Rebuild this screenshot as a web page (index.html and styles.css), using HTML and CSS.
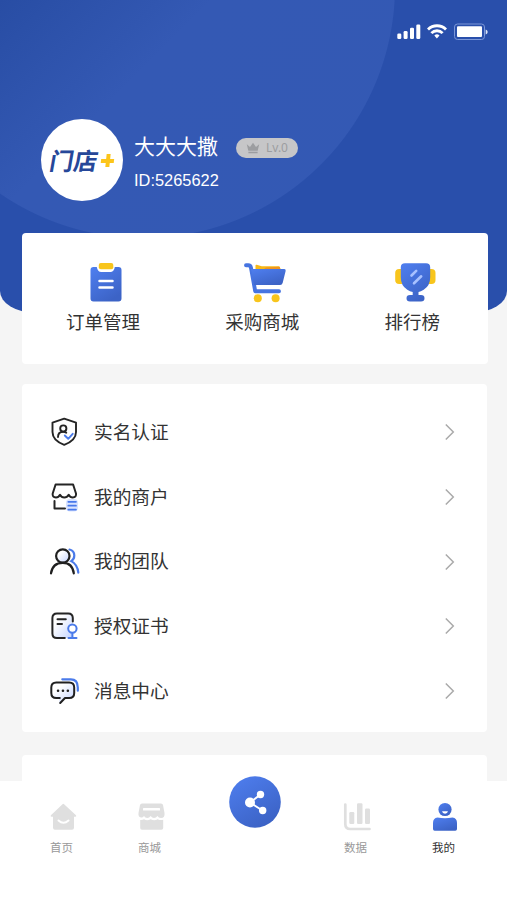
FILE: index.html
```html
<!DOCTYPE html>
<html lang="zh-CN">
<head>
<meta charset="utf-8">
<title>我的</title>
<link rel="stylesheet" href="styles.css">
</head>
<body>
<svg class="defs" width="0" height="0" aria-hidden="true">
  <defs>
    <linearGradient id="blue" x1="0" y1="0" x2="0.6" y2="1"><stop offset="0" stop-color="#4f7ff0"/><stop offset="1" stop-color="#3c63c6"/></linearGradient>
    <linearGradient id="tint" x1="0" y1="0" x2="1" y2="1"><stop offset="0.3" stop-color="#fff"/><stop offset="1" stop-color="#c3d3ff"/></linearGradient>
  </defs>
</svg>
<div class="screen">
  <header class="hero">
    <div class="status">
      <svg width="92" height="20" viewBox="0 0 92 20">
        <g fill="#fff">
          <rect x="1.3" y="11.5" width="4" height="5.5" rx="1.3"/>
          <rect x="7.6" y="9" width="4" height="8" rx="1.3"/>
          <rect x="14" y="5.7" width="4" height="11.3" rx="1.3"/>
          <rect x="20.3" y="2.5" width="4" height="14.5" rx="1.3"/>
          <path d="M38.3 13.6a3.6 3.6 0 0 1 5.2 0l-2.6 3z"/>
        </g>
        <g fill="none" stroke="#fff" stroke-width="2.8">
          <path d="M32 7.5a12.7 12.7 0 0 1 18 0"/>
          <path d="M35.4 11.1a7.8 7.8 0 0 1 11.2 0"/>
        </g>
        <rect x="58.5" y="2" width="30" height="15.5" rx="3" fill="none" stroke="#7c97d8"/>
        <rect x="61" y="4.3" width="25" height="10.8" rx="1" fill="#fff"/>
        <path d="M89.7 7.5q2 .6 2 2.5t-2 2.5z" fill="#dce4f7"/>
      </svg>
    </div>
    <div class="profile">
      <div class="avatar"><span class="logo">门店</span><span class="plus"></span></div>
      <div class="info">
        <div class="name-line">
          <span class="name">大大大撒</span>
          <span class="level">
            <svg width="14" height="12" viewBox="0 0 14 12"><path d="M.8 2.3 4 5.1 7 .7l3 4.4 3.2-2.8-1.5 6.500H2.300zM2.400 9.800h9.200v1.500H2.400z" fill="#9c9da0"/></svg>
            <span>Lv.0</span>
          </span>
        </div>
        <div class="uid">ID:5265622</div>
      </div>
    </div>
  </header>

  <main class="content">
    <section class="card shortcuts">
      <a class="shortcut">
        <svg width="46" height="42" viewBox="0 0 46 42">
          <path d="M11 4h3.300q.8 5 4.500 5h9q3.700 0 4.500-5H36q3 0 3 3v28.500q0 3-3 3H11q-3 0-3-3V7q0-3 3-3z" transform="translate(-.5)" fill="url(#blue)"/>
          <rect x="15.800" y="0" width="14.500" height="6.300" rx="2" fill="#f8c51c"/>
          <path d="M16.500 18h13M16.500 24.500h13" stroke="#fff" stroke-width="2.500" stroke-linecap="round"/>
        </svg>
        <span>订单管理</span>
      </a>
      <a class="shortcut cart">
        <svg width="46" height="42" viewBox="0 0 46 42">
          <path d="M14.500 7V2.500q0-1 1.200-.8l5 1.600H38L40.500 7z" fill="#f7b817"/>
          <path d="M25 4.500l14-.8V7H22z" fill="#ef9421"/>
          <path d="M5 2.300h2.200q2.300 0 2.800 2.600l4.200 23.300H38" fill="none" stroke="#4674e1" stroke-width="3.900" stroke-linecap="round" stroke-linejoin="round"/>
          <path d="M10 6h33q2 0 1.600 2l-3 12q-.5 2-2.500 2H13z" fill="url(#blue)"/>
          <circle cx="16.800" cy="35.300" r="4" fill="#f8c51c"/><circle cx="34.600" cy="35.300" r="4" fill="#f8c51c"/>
        </svg>
        <span>采购商城</span>
      </a>
      <a class="shortcut">
        <svg width="46" height="42" viewBox="0 0 46 42">
          <rect x="3.200" y="6" width="10" height="15" rx="4" fill="#f8c51c"/><rect x="33.500" y="6" width="10" height="15" rx="4" fill="#f8c51c"/>
          <path d="M13 .3h21q4.200 0 4.200 4v10q0 8.500-6.500 12.500-3 2-5.200 2.200V32H29q3.500 0 3.500 3.300T29 38.600H18q-3.500 0-3.500-3.300T18 32h2.700v-3q-2.700-.3-5.400-2.200Q8.800 22.800 8.800 14.300v-10q0-4 4.200-4z" fill="url(#blue)"/>
          <path d="M19.500 12.500l4.700-4.700M22 20.300l7.200-7" stroke="#a8c1ff" stroke-width="2.600" stroke-linecap="round"/>
        </svg>
        <span>排行榜</span>
      </a>
    </section>

    <nav class="card menu">
      <a class="row">
        <svg class="ico" width="32" height="32" viewBox="0 0 32 32" fill="none" stroke="#252525" stroke-width="1.900" stroke-linecap="round" stroke-linejoin="round">
          <path d="M16.200 2.600 L28 6.600V16q0 8.500-11.800 12.800Q4.500 24.500 4.500 16V6.600z"/>
          <circle cx="15.300" cy="12.500" r="3.100"/><path d="M10 21q0-5.300 5.300-5.300 1.800 0 3 1"/><path d="M16.800 19.500l3.400 3.300 4.500-5" stroke="#4b7bea"/>
        </svg>
        <span>实名认证</span><svg class="arrow" width="12" height="18" viewBox="0 0 12 18"><path d="M1.800 1.500 9.300 9l-7.500 7.500"/></svg>
      </a>
      <a class="row">
        <svg class="ico" width="32" height="32" viewBox="0 0 32 32" fill="none" stroke="#252525" stroke-width="2" stroke-linecap="round" stroke-linejoin="round">
          <rect x="18" y="18" width="12" height="12.500" rx="4" fill="#d8e3ff" stroke="none"/>
          <path d="M7.600 3.500h17.500l2.900 9q.6 3.700-3.300 4-2.500 0-4-2.700-1.600 2.700-4.400 2.700t-4.300-2.700Q10.500 16.500 8 16.500q-4-.3-3.300-4z"/>
          <path d="M6.500 20v7.600H17"/><path d="M20.300 20.800H28M20.300 24.700H28M20.300 28.600H28" stroke="#4879eb" stroke-width="1.700"/>
        </svg>
        <span>我的商户</span><svg class="arrow" width="12" height="18" viewBox="0 0 12 18"><path d="M1.800 1.500 9.300 9l-7.500 7.500"/></svg>
      </a>
      <a class="row">
        <svg class="ico" width="32" height="32" viewBox="0 0 32 32" fill="none" stroke="#202020" stroke-width="2.200" stroke-linecap="round">
          <path d="M21.500 3.500q4.800 1 4.800 6.100 0 3.700-3 5.500 6.200 3.300 7 11.500" stroke="#4b7bea"/>
          <circle cx="14.800" cy="10" r="6.700" fill="url(#tint)"/><path d="M3 27.300q1.500-10.500 11.800-10.500 9.700 0 11 10.500"/>
        </svg>
        <span>我的团队</span><svg class="arrow" width="12" height="18" viewBox="0 0 12 18"><path d="M1.800 1.500 9.300 9l-7.500 7.500"/></svg>
      </a>
      <a class="row">
        <svg class="ico" width="32" height="32" viewBox="0 0 32 32" fill="none" stroke="#252525" stroke-width="2" stroke-linecap="round">
          <path d="M4.500 8q0-4.500 4.500-4.500h11q4.500 0 4.500 4.500v20H9q-4.500 0-4.500-4.500z" fill="url(#tint)" stroke="none"/>
          <path d="M24.800 11.500V8q0-4.600-4.600-4.600H9Q4.400 3.400 4.400 8v15.500Q4.400 28 9 28h7.800"/>
          <path d="M9.500 9.300h8.300M9.500 14h4.500"/><g stroke="#4b7bea"><circle cx="24.400" cy="18.600" r="4.200" fill="#fff"/><path d="M24.400 23v4.800M20.500 28h8"/></g>
        </svg>
        <span>授权证书</span><svg class="arrow" width="12" height="18" viewBox="0 0 12 18"><path d="M1.800 1.500 9.300 9l-7.500 7.500"/></svg>
      </a>
      <a class="row">
        <svg class="ico" width="32" height="32" viewBox="0 0 32 32" fill="none" stroke="#202020" stroke-width="2" stroke-linecap="round" stroke-linejoin="round">
          <path d="M14.300 4.300h8.500q7 0 7 8.200v3.200" stroke="#4b7bea" stroke-width="2.200"/>
          <path d="M8.300 7.500h12.900q5 0 5 5V18q0 5-5 5h-4.500l-5.500 5 .2-5H8.300q-5 0-5-5v-5.500q0-5 5-5z" fill="url(#tint)" stroke="none"/>
          <path d="M12.200 28l4.800-5h4.200q5 0 5-5v-5.500q0-5-5-5H8.300q-5 0-5 5V18q0 5 5 5h3.500"/>
          <path d="M10 15.700h.1M14.900 15.700h.1M19.800 15.700h.1" stroke-width="2.500"/>
        </svg>
        <span>消息中心</span><svg class="arrow" width="12" height="18" viewBox="0 0 12 18"><path d="M1.800 1.500 9.300 9l-7.500 7.500"/></svg>
      </a>
    </nav>

    <section class="card next"></section>
  </main>

  <footer class="tabbar">
    <a class="tab">
      <svg width="32" height="32" viewBox="0 0 32 32"><path d="M16.500 3.200q.8-.7 1.600 0L30 14.300q1 1.400-.7 1.500H28v11q0 2-2 2H9q-2 0-2-2v-11H5.600q-1.700-.1-.7-1.500z" fill="#dfdfdf"/><path d="M12.500 19.500q5 4.500 10 0" fill="none" stroke="#fff" stroke-width="2" stroke-linecap="round"/></svg>
      <span>首页</span>
    </a>
    <a class="tab">
      <svg width="32" height="32" viewBox="0 0 32 32"><path d="M8 2.500h19q1.700 0 2 1.500l1.500 8q.6 5-3.500 5-2.500 0-3.500-2-1.500 2-3.500 2t-3.300-2q-1.500 2-3.500 2T10 15q-1.500 2-3 1.500Q4 16 4.500 12L6 4q.4-1.500 2-1.500zM7 19q2 0 3-.8 3 2 6.700 0 3.600 2 7 0 2.500 1.500 5.500.5V27q0 1.800-1.800 1.800H8q-1.800 0-1.800-1.800v-8z" fill="#dfdfdf"/><rect x="9" y="7" width="17" height="2.600" rx=".5" fill="#fff"/></svg>
      <span>商城</span>
    </a>
    <a class="share">
      <svg width="52" height="52" viewBox="0 0 52 52"><circle cx="26" cy="26" r="25.800" fill="url(#blue)"/><path d="M21 26.500 31.500 18.500M21 26.500l12.500 8" stroke="#fff" stroke-width="1.900"/><circle cx="21" cy="26.500" r="5" fill="#fff"/><circle cx="31.500" cy="18.500" r="3.700" fill="#fff"/><circle cx="33.700" cy="34.500" r="3.700" fill="#fff"/></svg>
    </a>
    <a class="tab">
      <svg width="32" height="32" viewBox="0 0 32 32" fill="none" stroke="#dfdfdf"><path d="M5.300 3.500V23q0 5 5 5H29.500" stroke-width="2.700" stroke-linecap="round"/><g fill="#dfdfdf" stroke="none"><rect x="9.300" y="11" width="5" height="12" rx="1.200"/><rect x="17" y="2.300" width="5.500" height="20.700" rx="1.200"/><rect x="25" y="7.500" width="5" height="15.500" rx="1.200"/></g></svg>
      <span>数据</span>
    </a>
    <a class="tab active">
      <svg width="32" height="32" viewBox="0 0 32 32"><circle cx="17" cy="8.500" r="6.600" fill="url(#blue)"/><path d="M9.500 16.500q7.500 1.500 15 0 4.500.5 4.500 5.500v6q0 1.700-1.700 1.700H6.700Q5 29.700 5 28v-6q0-5 4.500-5.500z" fill="url(#blue)"/><path d="M14 10.300h6q-.5 2.400-3 2.400t-3-2.400z" fill="#fff"/></svg>
      <span>我的</span>
    </a>
  </footer>
</div>
</body>
</html>
```
FILE: styles.css
```css
* { box-sizing: border-box; }
body { margin: 0; font-family: "Noto Sans CJK SC", "Liberation Sans", sans-serif; color: #333; background: #f5f5f5; }
.defs { position: absolute; }
.screen { height: 900px; overflow: hidden; display: flex; flex-direction: column; background: #f5f5f5; }

.hero {
  height: 313px;
  flex: none;
  border-radius: 0 0 36px 36px / 0 0 22px 22px;
  background:
    radial-gradient(circle at 143px -14px, transparent 251.500px, #294fab 252.500px),
    linear-gradient(135deg, #284da4 0, #3459b4 150px, #3359b4 100%);
}
.status { height: 119px; padding: 22px 19px 0 0; display: flex; justify-content: flex-end; }
.profile { display: flex; padding-left: 41px; }
.avatar { width: 82px; height: 82px; border-radius: 50%; background: #fff; display: flex; align-items: center; justify-content: center; gap: 3px; }
.logo { font-size: 24px; line-height: 30px; font-weight: 700; color: #264799; transform: skewX(-10deg); }
.plus { width: 13px; height: 13px; background: linear-gradient(#fcc51b, #fcc51b) center / 100% 4px no-repeat, linear-gradient(#fcc51b, #fcc51b) center / 4px 100% no-repeat; transform: skewX(-6deg); }
.info { padding: 10px 0 0 11px; color: #fff; }
.name-line { display: flex; align-items: center; height: 32px; }
.name { font-size: 21px; line-height: 32px; width: 102px; }
.level { display: flex; align-items: center; gap: 6px; width: 62px; height: 20px; margin-top: 5px; padding-left: 10px; border-radius: 10px; background: #c6c6c8; color: #9c9da0; font: 12px/20px "Noto Sans", sans-serif; }
.uid { font: 16.400px/20px "Liberation Sans", sans-serif; margin-top: 9px; }

.content { flex: 1; min-height: 0; margin-top: -80px; padding: 0 20px 0 22px; display: flex; flex-direction: column; }
.card { flex: none; background: #fff; border-radius: 4px; }
.shortcuts { height: 131px; margin-right: -1px; padding: 30px 48px 0 44px; display: flex; justify-content: space-between; }
.card.menu, .card.next { margin-right: 0; }
.shortcut { display: flex; flex-direction: column; align-items: center; font-size: 18.500px; line-height: 28px; }
.shortcut svg { margin-left: 6px; }
.shortcut.cart svg { margin-left: 3px; }
.shortcut span { margin-top: 2px; }
.menu { margin-top: 20px; height: 348px; padding: 16px 31px 0 26px; }
.row { display: flex; align-items: center; height: 64.700px; font-size: 18.700px; line-height: 28px; }
.row span { margin: -3px 0 0 14px; flex: 1; }
.arrow { fill: none; stroke: #aaa; stroke-width: 1.500; }
.next { margin-top: 23px; height: 60px; }

.tabbar { height: 119px; flex: none; background: #fff; display: grid; grid-template-columns: 35px 54px 34px 54px 52px 52px 48px 54px 34px 54px 1fr; }
.tab { display: flex; flex-direction: column; align-items: center; padding-top: 20px; font-size: 11.500px; line-height: 18px; color: #999; }
.tab span { margin: 5px 1px 0 0; }
.tab:nth-child(1) { grid-column: 2; }
.tab:nth-child(2) { grid-column: 4; }
.share { grid-column: 6; margin-top: -5px; z-index: 1; }
.tab:nth-child(4) { grid-column: 8; }
.tab:nth-child(5) { grid-column: 10; }
.tab.active { color: #333; }
```
